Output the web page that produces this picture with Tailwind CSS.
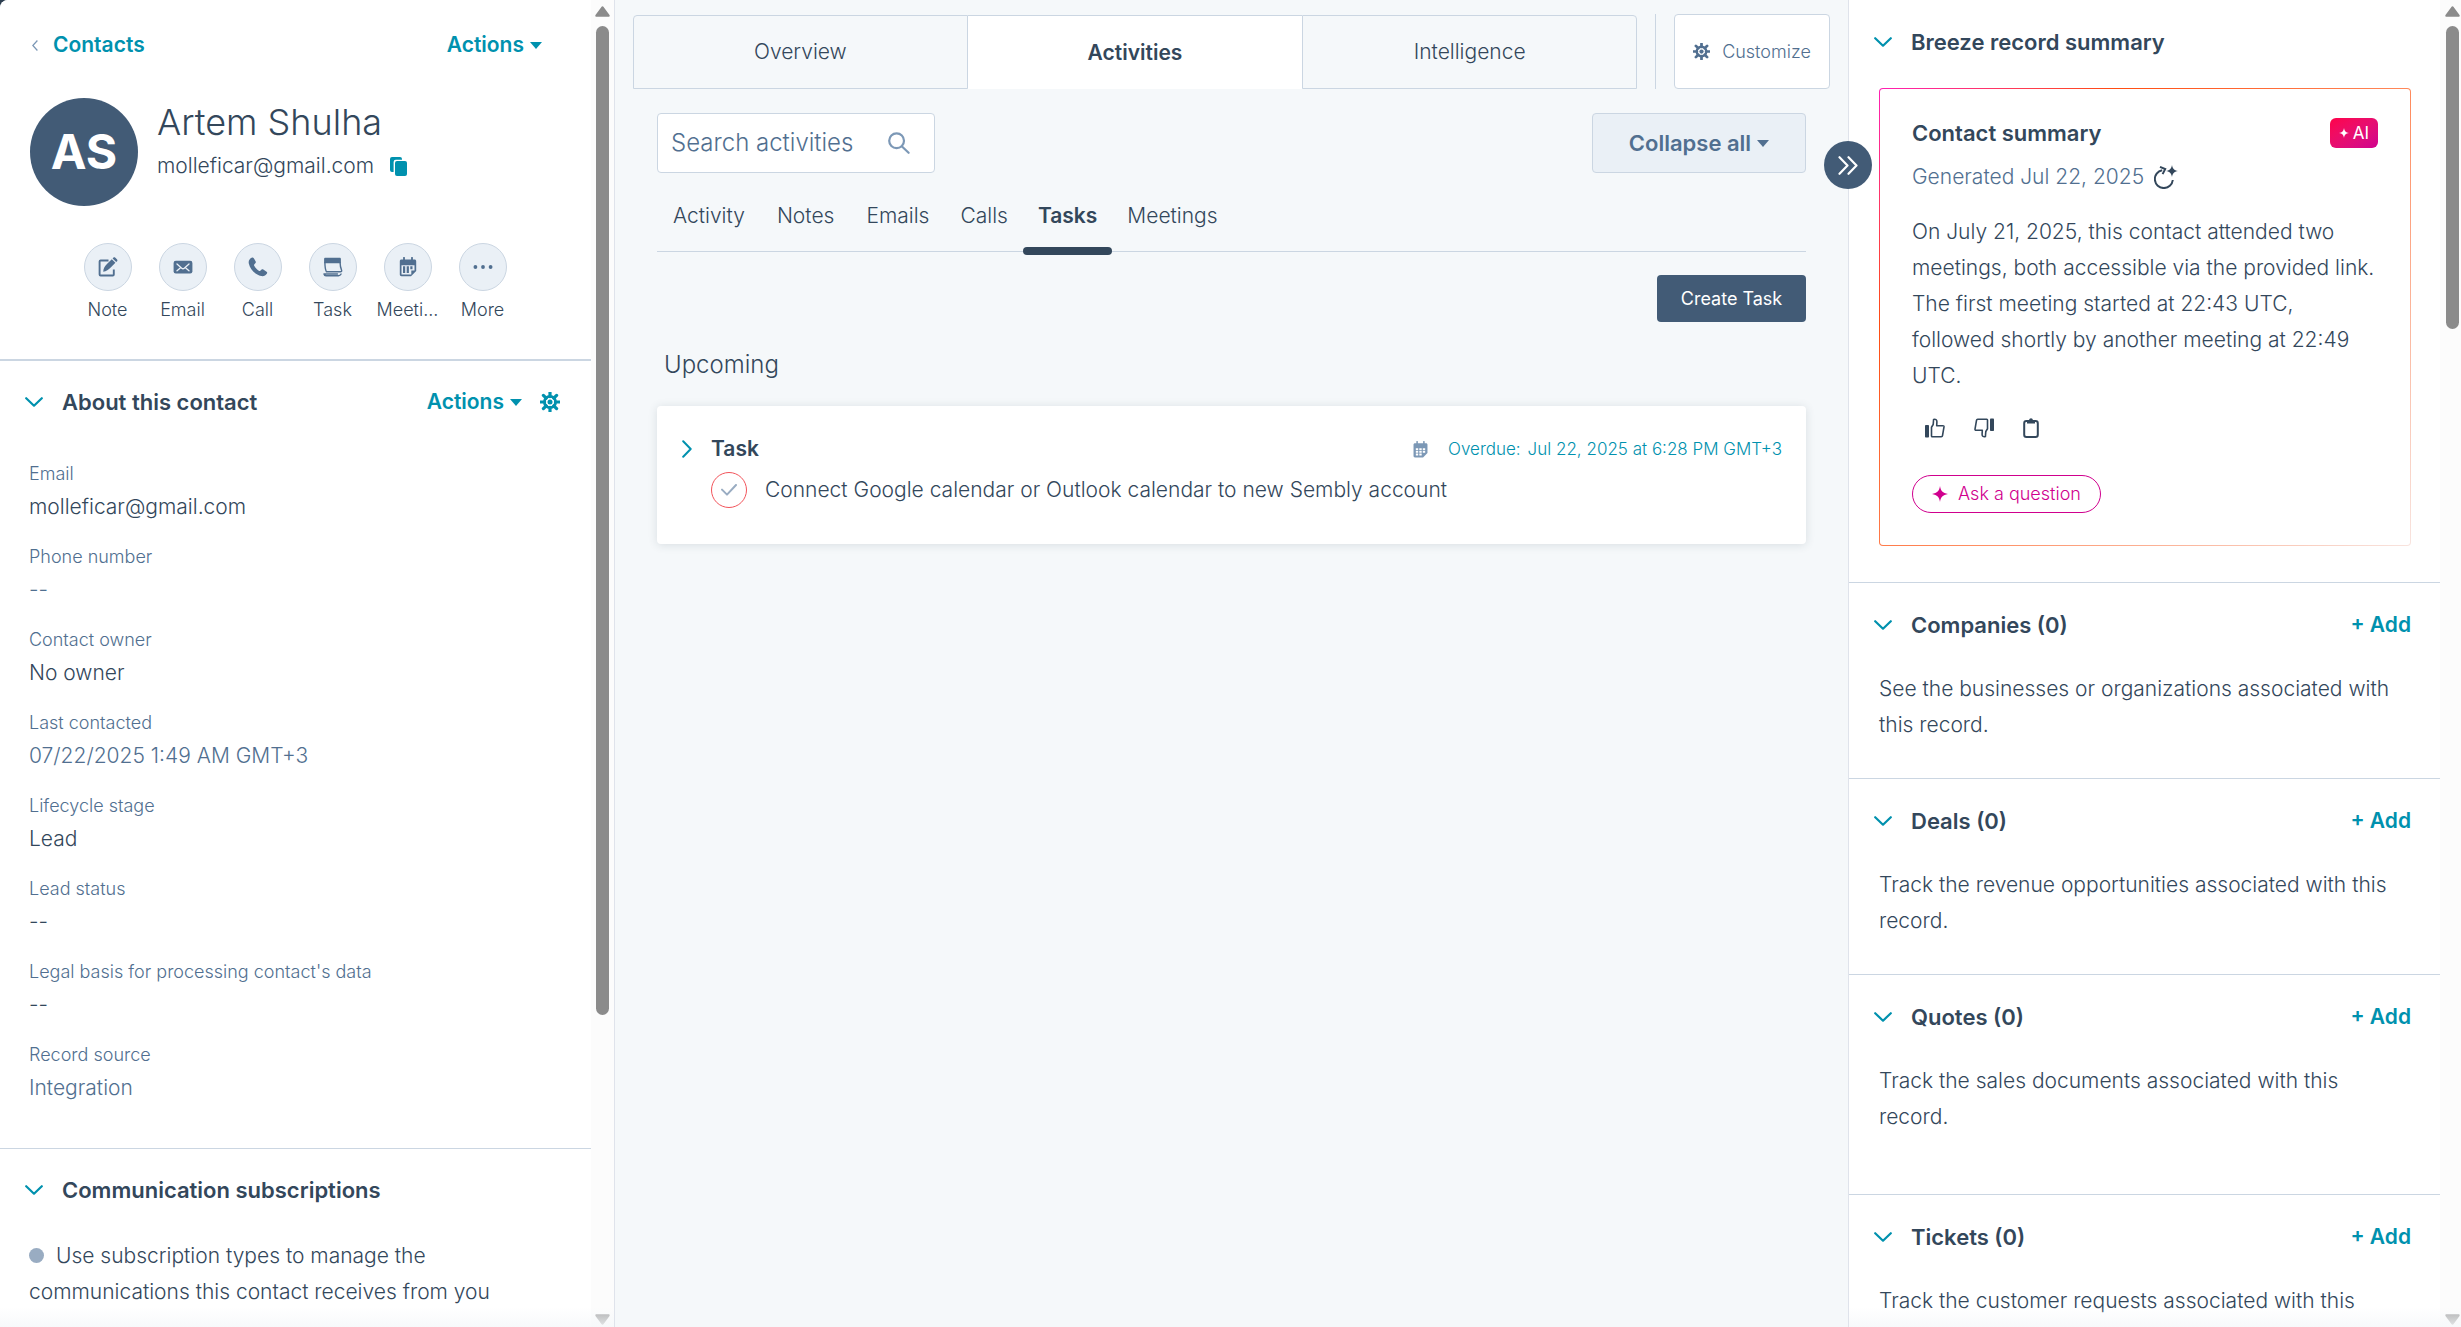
<!DOCTYPE html>
<html lang="en">

<head>
    <meta charset="UTF-8" />
    <meta name="viewport" content="width=device-width, initial-scale=1.0" />
    <title>Artem Shulha - Contacts</title>
    <script src="https://cdn.jsdelivr.net/npm/@tailwindcss/browser@4"></script>
</head>

<body class="h-screen overflow-hidden bg-[#2d3e50] font-['Inter',sans-serif] font-light text-[21px] leading-9 text-[#33475b]">
    <!-- shared icons -->
    <svg class="hidden">
        <symbol id="chevron-down" viewBox="0 0 18 10">
            <path d="M1.2 1.2 9 8.7l7.800-7.500" fill="none" stroke="currentColor" stroke-width="2.200" stroke-linecap="round" stroke-linejoin="round" />
        </symbol>
        <symbol id="caret" viewBox="0 0 12 7">
            <path d="M0 0h12L6 7z" fill="currentColor" />
        </symbol>
        <symbol id="gear" viewBox="0 0 20 20">
            <g stroke="currentColor" fill="none">
                <path d="M10 .6v4M10 15.400v4M.6 10h4M15.400 10h4M3.400 3.400l2.800 2.800M13.800 13.800l2.800 2.800M3.400 16.600l2.800-2.800M13.800 6.200l2.800-2.800" stroke-width="3.200" stroke-linecap="round" />
                <circle cx="10" cy="10" r="5.600" stroke-width="2.800" />
            </g>
            <circle cx="10" cy="10" r="2.500" fill="currentColor" />
        </symbol>
        <symbol id="sparkle" viewBox="0 0 16 16">
            <path d="M8 0c.8 4.800 2.600 7 8 8-5.400 1-7.200 3.200-8 8-.8-4.800-2.600-7-8-8 5.400-1 7.200-3.200 8-8z" fill="currentColor" />
        </symbol>
        <symbol id="thumb" viewBox="0 0 20 20">
            <rect x="0" y="7" width="4" height="12.500" rx=".8" fill="currentColor" />
            <path d="M6.500 18V9.200L8.200 6.500 8.600 1.400c1.900-.5 3.400.2 3.300 2.300l-.2 4h6.200c.8 0 1.200.5 1.100 1.200l-1.500 8.800c-.1.700-.5 1-1.200 1H7.200c-.4 0-.7-.3-.7-.7z" fill="none" stroke="currentColor" stroke-width="1.600" stroke-linejoin="round" />
        </symbol>
        <symbol id="arrow-up" viewBox="0 0 15 11">
            <path d="M6.400.9a1.300 1.300 0 0 1 2.200 0l5.900 8.200c.5.800 0 1.700-.9 1.700H1.400c-.9 0-1.400-.9-.9-1.700z" fill="currentColor" />
        </symbol>
    </svg>

    <div class="flex h-full overflow-hidden rounded-tl-lg bg-[#f5f8fa]">
        <!-- left sidebar -->
        <aside class="relative flex w-[615px] shrink-0 overflow-hidden border-r border-[#dfe3eb] bg-white">
            <div class="min-w-0 flex-1">
                <header class="border-b-2 border-[#cbd6e2] pt-[27px] pb-[34px]">
                    <div class="flex items-center justify-between pr-[49px] pl-8">
                        <a href="#" class="flex items-center gap-[15px] font-semibold text-[#0091ae]">
                            <svg class="h-[11px] w-[6px] text-[#7c98b6]" viewBox="0 0 6 11" fill="none" stroke="currentColor" stroke-width="1.300"><path d="M5.400.5.800 5.500l4.600 5" /></svg>
                            Contacts
                        </a>
                        <button class="flex items-center gap-1.5 font-semibold text-[#0091ae]">Actions <svg class="h-[7px] w-3"><use href="#caret" /></svg></button>
                    </div>

                    <div class="mt-[35px] flex items-start gap-[19px] pl-[30px]">
                        <div class="flex size-[108px] items-center justify-center rounded-full bg-[#425b76] text-[48px] font-bold text-white">AS</div>
                        <div>
                            <h1 class="text-[36px] leading-[48px]">Artem Shulha</h1>
                            <div class="mt-0.5 flex items-center gap-4">
                                molleficar@gmail.com
                                <button aria-label="Copy email" class="text-[#0091ae]">
                                    <svg class="h-[19px] w-[17px]" viewBox="0 0 17 19" fill="currentColor"><rect x="5" y="4" width="12" height="15" rx="2" /><path d="M2 0h8a2 2 0 0 1 2 2v.8H5.800A2.200 2.200 0 0 0 3.600 5v10H2a2 2 0 0 1-2-2V2a2 2 0 0 1 2-2z" /></svg>
                                </button>
                            </div>
                        </div>
                    </div>

                    <div class="mt-[37px] flex pl-[70px] text-[18px] leading-[30px]">
                        <div class="flex w-[75px] flex-col items-center gap-1">
                            <button aria-label="Note" class="flex size-12 items-center justify-center rounded-full border border-[#cbd6e2] bg-[#eaf0f6] text-[#516f90]">
                                <svg class="size-5" viewBox="0 0 20 20"><path d="M10.500 3.500H2.600c-.6 0-1 .4-1 1v13c0 .6.4 1 1 1h12.200c.6 0 1-.4 1-1v-5" fill="none" stroke="currentColor" stroke-width="1.900" /><path d="M5.200 14.800c.3-3.500 1.600-5.700 4-8l4.600-4.600 3.600 3.500-4.700 4.700c-2.300 2.300-4.200 3.800-7.500 4.400zM14.600 1.500l.9-.9c.5-.5 1.100-.5 1.600 0l2 2c.5.500.5 1.100 0 1.600l-.9.9z" fill="currentColor" /></svg>
                            </button>
                            <span>Note</span>
                        </div>
                        <div class="flex w-[75px] flex-col items-center gap-1">
                            <button aria-label="Email" class="flex size-12 items-center justify-center rounded-full border border-[#cbd6e2] bg-[#eaf0f6] text-[#516f90]">
                                <svg class="size-5" viewBox="0 0 20 20"><rect x=".6" y="3.800" width="18.800" height="12.600" rx="2.200" fill="currentColor" /><path d="m4 7 4.700 4.200c.8.700 1.800.7 2.600 0L16 7M4 13.800l3-2.600M16 13.800l-3-2.600" fill="none" stroke="#eaf0f6" stroke-width="1.300" stroke-linecap="round" /></svg>
                            </button>
                            <span>Email</span>
                        </div>
                        <div class="flex w-[75px] flex-col items-center gap-1">
                            <button aria-label="Call" class="flex size-12 items-center justify-center rounded-full border border-[#cbd6e2] bg-[#eaf0f6] text-[#516f90]">
                                <svg class="size-5" viewBox="0 0 20 20"><path d="M3.600.8C1.300 2 .3 4 .8 6.500c1.300 6 6.200 11.100 12.400 12.500 2.300.5 4.600-.5 5.800-2.500.4-.7.200-1.400-.4-1.800l-3.300-2.200c-.6-.4-1.200-.3-1.700.1l-1.300 1.100c-.5.400-1 .4-1.500.1C9 12.500 7.300 10.700 6.200 8.700c-.3-.5-.2-1 .2-1.500L7.500 6c.4-.5.400-1.100.1-1.700L5.800 1.300C5.300.5 4.500.3 3.600.8z" fill="currentColor" /></svg>
                            </button>
                            <span>Call</span>
                        </div>
                        <div class="flex w-[75px] flex-col items-center gap-1">
                            <button aria-label="Task" class="flex size-12 items-center justify-center rounded-full border border-[#cbd6e2] bg-[#eaf0f6] text-[#516f90]">
                                <svg class="size-5" viewBox="0 0 20 20"><path d="M2.500.8h14c.9 0 1.400.5 1.400 1.300v4.100H1.100V2.100c0-.8.500-1.300 1.400-1.300z" fill="currentColor" /><path d="M1.900 5.500c0 4.200.2 6.600 1.500 9.300h14c1.100 0 1.500-.7 1.200-1.500-1-2.500-1.500-4.500-1.500-7.800M1 17c.2.900.8 1.700 2 1.700h12.500c1.500 0 2-.6 2.600-1.700M1 17h13.500" fill="none" stroke="currentColor" stroke-width="1.400" stroke-linecap="round" /></svg>
                            </button>
                            <span>Task</span>
                        </div>
                        <div class="flex w-[75px] flex-col items-center gap-1">
                            <button aria-label="Meeting" class="flex size-12 items-center justify-center rounded-full border border-[#cbd6e2] bg-[#eaf0f6] text-[#516f90]">
                                <svg class="size-5" viewBox="0 0 20 20"><path d="M3.500 2.600h13c1 0 1.700.7 1.700 1.700v9.700L13 19.300H3.500c-1 0-1.700-.7-1.700-1.700V4.300c0-1 .7-1.700 1.700-1.700z" fill="currentColor" /><path d="M6 .8v3.500M14 .8v3.500" stroke="currentColor" stroke-width="1.800" stroke-linecap="round" /><path d="M3.500 8.300h13v5.200h-3.200v4.100H3.500z" fill="#eaf0f6" /><path d="M6.100 9.300v6.800M9.800 9.300v6.800M13.400 9.300v3" stroke="currentColor" stroke-width="2.200" /></svg>
                            </button>
                            <span>Meeti...</span>
                        </div>
                        <div class="flex w-[75px] flex-col items-center gap-1">
                            <button aria-label="More" class="flex size-12 items-center justify-center rounded-full border border-[#cbd6e2] bg-[#eaf0f6] text-[#516f90]">
                                <svg class="size-5" viewBox="0 0 20 20" fill="currentColor"><circle cx="2.400" cy="10" r="1.900" /><circle cx="10" cy="10" r="1.900" /><circle cx="17.600" cy="10" r="1.900" /></svg>
                            </button>
                            <span>More</span>
                        </div>
                    </div>
                </header>

                <section class="border-b border-[#cbd6e2] pt-[23px] pb-[42px]">
                    <div class="flex items-center pr-[31px] pl-[25px] font-semibold">
                        <button class="flex items-center gap-[19px] text-[22px]"><svg class="h-2.5 w-[18px] text-[#0091ae]"><use href="#chevron-down" /></svg> About this contact</button>
                        <button class="ml-auto flex items-center gap-1.5 text-[#0091ae]">Actions <svg class="h-[7px] w-3"><use href="#caret" /></svg></button>
                        <button aria-label="Settings" class="ml-[18px] text-[#0091ae]"><svg class="size-5"><use href="#gear" /></svg></button>
                    </div>
                    <dl class="mt-[39px] flex flex-col gap-[17px] pl-[29px]">
                        <div>
                            <dt class="text-[18px] leading-[30px] text-[#516f90]">Email</dt>
                            <dd>molleficar@gmail.com</dd>
                        </div>
                        <div>
                            <dt class="text-[18px] leading-[30px] text-[#516f90]">Phone number</dt>
                            <dd class="text-[#516f90]">--</dd>
                        </div>
                        <div>
                            <dt class="text-[18px] leading-[30px] text-[#516f90]">Contact owner</dt>
                            <dd>No owner</dd>
                        </div>
                        <div>
                            <dt class="text-[18px] leading-[30px] text-[#516f90]">Last contacted</dt>
                            <dd class="text-[#516f90]">07/22/2025 1:49 AM GMT+3</dd>
                        </div>
                        <div>
                            <dt class="text-[18px] leading-[30px] text-[#516f90]">Lifecycle stage</dt>
                            <dd>Lead</dd>
                        </div>
                        <div>
                            <dt class="text-[18px] leading-[30px] text-[#516f90]">Lead status</dt>
                            <dd>--</dd>
                        </div>
                        <div>
                            <dt class="text-[18px] leading-[30px] text-[#516f90]">Legal basis for processing contact's data</dt>
                            <dd>--</dd>
                        </div>
                        <div>
                            <dt class="text-[18px] leading-[30px] text-[#516f90]">Record source</dt>
                            <dd class="text-[#516f90]">Integration</dd>
                        </div>
                    </dl>
                </section>

                <section class="pt-[23px]">
                    <button class="flex items-center gap-[19px] pl-[25px] text-[22px] font-semibold"><svg class="h-2.5 w-[18px] text-[#0091ae]"><use href="#chevron-down" /></svg> Communication subscriptions</button>
                    <p class="mt-[30px] pr-16 pl-[29px]"><span class="mr-3 inline-block size-[15px] rounded-full bg-[#99acc2]"></span>Use subscription types to manage the communications this contact receives from you</p>
                </section>
            </div>
            <!-- scrollbar -->
            <div class="flex w-[23px] flex-col items-center justify-between bg-[#fcfcfc] pt-1.5 pb-0.5 text-[#8b8b8b]">
                <svg class="h-[11px] w-[15px]"><use href="#arrow-up" /></svg>
                <div class="mt-[9px] h-[75%] w-[13px] rounded-full bg-[#8b8b8b]"></div>
                <svg class="mt-auto h-[11px] w-[15px] rotate-180 text-[#a8a8a8]"><use href="#arrow-up" /></svg>
            </div>
            <div class="absolute inset-x-0 bottom-0 h-5 bg-linear-to-b from-transparent to-[#f5f8fa]/80"></div>
        </aside>

        <!-- main column -->
        <main class="min-w-0 flex-1 px-[18px] pt-3.5">
            <div class="flex h-[75px]">
                <div role="tablist" class="mt-px grid flex-1 grid-cols-3 text-center">
                    <button role="tab" class="rounded-tl border border-[#cbd6e2]">Overview</button>
                    <button role="tab" aria-selected="true" class="border-t border-[#cbd6e2] bg-white font-semibold">Activities</button>
                    <button role="tab" class="rounded-tr border border-[#cbd6e2]">Intelligence</button>
                </div>
                <div class="mx-[18px] w-px bg-[#cbd6e2]"></div>
                <button class="flex w-[156px] items-center justify-center gap-3 rounded border border-[#cbd6e2] bg-white text-[18px] text-[#516f90]"><svg class="size-[17px]"><use href="#gear" /></svg> Customize</button>
            </div>

            <div class="px-6">
                <div class="mt-6 flex justify-between">
                    <label class="flex h-[60px] w-[278px] items-center rounded border border-[#cbd6e2] bg-white pr-6 pl-[13px]">
                        <input type="search" aria-label="Search activities" placeholder="Search activities" class="w-0 min-w-0 flex-1 bg-transparent text-[24px] outline-none placeholder:text-[#516f90]" />
                        <svg class="size-[22px] text-[#7c98b6]" viewBox="0 0 22 22" fill="none" stroke="currentColor" stroke-width="2.200" stroke-linecap="round"><circle cx="8.600" cy="8.800" r="7.400" /><path d="m14 14.500 6.600 6.300" /></svg>
                    </label>
                    <button class="flex h-[60px] w-[214px] items-center justify-center gap-1.5 rounded border border-[#cbd6e2] bg-[#eaf0f6] text-[22px] font-semibold text-[#516f90]">Collapse all <svg class="h-[7px] w-3"><use href="#caret" /></svg></button>
                </div>

                <nav class="mt-[17px] flex border-b border-[#cbd6e2]">
                    <a href="#" class="px-4 pt-2 pb-[17px]">Activity</a>
                    <a href="#" class="px-4 pt-2 pb-[17px]">Notes</a>
                    <a href="#" class="px-4 pt-2 pb-[17px]">Emails</a>
                    <a href="#" class="px-[15px] pt-2 pb-[17px]">Calls</a>
                    <a href="#" class="relative px-[15px] pt-2 pb-[17px] font-semibold">Tasks<span class="absolute inset-x-0 -bottom-1 h-2 rounded-full bg-[#33475b]"></span></a>
                    <a href="#" class="px-[15px] pt-2 pb-[17px]">Meetings</a>
                </nav>

                <button class="mt-[23px] ml-auto block h-[47px] w-[149px] rounded bg-[#425b76] text-[18px] font-normal text-white">Create Task</button>

                <h2 class="mt-[25px] pl-[7px] text-[24px]">Upcoming</h2>

                <article class="mt-[23px] rounded bg-white pt-[25px] pr-6 pb-9 pl-[25px] shadow-[0_1px_10px_rgba(45,62,80,0.14)]">
                    <div class="flex items-center">
                        <button aria-label="Expand task" class="text-[#0091ae]"><svg class="h-[18px] w-2.5" viewBox="0 0 10 18" fill="none" stroke="currentColor" stroke-width="2" stroke-linecap="round" stroke-linejoin="round"><path d="M1.200 1.200 8.700 9l-7.500 7.800" /></svg></button>
                        <h3 class="ml-[19px] text-[21px] font-semibold">Task</h3>
                        <svg class="ml-auto size-[17px] text-[#7c98b6]" viewBox="0 0 20 20"><path d="M3.500 2.600h13c1 0 1.700.7 1.700 1.700v9.700L13 19.300H3.500c-1 0-1.700-.7-1.700-1.700V4.300c0-1 .7-1.700 1.700-1.700z" fill="currentColor" /><path d="M6 .8v3.500M14 .8v3.500" stroke="currentColor" stroke-width="1.800" stroke-linecap="round" /><path d="M4.500 9.500h11M4.500 12.700h11M4.500 15.900h7.500" stroke="#fff" stroke-width="2.200" stroke-dasharray="2.800 1.300" /></svg>
                        <span class="ml-[19px] text-[17px] text-[#0091ae]">Overdue:</span>
                        <a href="#" class="ml-[7px] text-[17px] text-[#0091ae]">Jul 22, 2025 at 6:28 PM GMT+3</a>
                    </div>
                    <div class="mt-[5px] flex items-center gap-[18px] pl-[29px]">
                        <button aria-label="Mark task complete" class="flex size-9 items-center justify-center rounded-full border border-[#f2545b] text-[#99acc2]">
                            <svg class="h-3 w-4" viewBox="0 0 16 12" fill="none" stroke="currentColor" stroke-width="2" stroke-linecap="round" stroke-linejoin="round"><path d="m1 5.600 5 5L15 1" /></svg>
                        </button>
                        <p>Connect Google calendar or Outlook calendar to new Sembly account</p>
                    </div>
                </article>
            </div>
        </main>

        <!-- right sidebar -->
        <aside class="relative flex w-[613px] shrink-0 border-l border-[#dfe3eb] bg-white">
            <button aria-label="Collapse sidebar" class="absolute top-[141px] -left-[25px] flex size-12 items-center justify-center rounded-full bg-[#425b76] text-white">
                <svg class="h-[19px] w-5" viewBox="0 0 20 19" fill="none" stroke="currentColor" stroke-width="2.200" stroke-linecap="round" stroke-linejoin="round"><path d="m1.500 1.200 8 8.300-8 8.300M10.500 1.200l8 8.300-8 8.300" /></svg>
            </button>
            <div class="min-w-0 flex-1">
                <section class="border-b border-[#cbd6e2] pt-6 pr-[29px] pb-9 pl-[25px]">
                    <button class="flex items-center gap-[19px] text-[22px] font-semibold"><svg class="h-2.5 w-[18px] text-[#0091ae]"><use href="#chevron-down" /></svg> Breeze record summary</button>
                    <div class="mt-7 ml-[5px] rounded bg-[linear-gradient(135deg,#ff1fb4,#ff4d12_24%,#ff8a5c_54%,#f8e4df)] p-px">
                        <div class="rounded-[3px] bg-white px-8 pt-[26px] pb-8">
                            <div class="flex items-center justify-between">
                                <h3 class="text-[22px] font-semibold">Contact summary</h3>
                                <span class="flex h-[30px] w-12 items-center justify-center gap-1 rounded-md bg-linear-to-br from-[#ff0048] to-[#d0008e] text-[17px] font-normal text-white"><svg class="size-2.5"><use href="#sparkle" /></svg>AI</span>
                            </div>
                            <div class="mt-2 flex items-center gap-2.5 text-[#516f90]">
                                Generated Jul 22, 2025
                                <button aria-label="Regenerate" class="text-[#33475b]">
                                    <svg class="size-6" viewBox="0 0 24 24"><path d="M8.200 5.200A9 9 0 1 0 18.800 15" fill="none" stroke="currentColor" stroke-width="2" /><path d="m6 1.800 5.200 2.300-2.600 5" fill="none" stroke="currentColor" stroke-width="2" /><path d="M18 0c.6 3.600 2 5.300 6 6-4 .7-5.400 2.400-6 6-.6-3.600-2-5.300-6-6 4-.7 5.400-2.400 6-6z" fill="currentColor" /></svg>
                                </button>
                            </div>
                            <p class="mt-[19px]">On July 21, 2025, this contact attended two meetings, both accessible via the provided link. The first meeting started at 22:43 UTC, followed shortly by another meeting at 22:49 UTC.</p>
                            <div class="mt-4 flex h-9 items-center gap-[29px] pl-[13px]">
                                <button aria-label="Like"><svg class="size-5"><use href="#thumb" /></svg></button>
                                <button aria-label="Dislike"><svg class="size-5 rotate-180"><use href="#thumb" /></svg></button>
                                <button aria-label="Copy summary">
                                    <svg class="h-5 w-4" viewBox="0 0 16 20"><rect x="1.200" y="3" width="13.600" height="15.900" rx="2.200" fill="none" stroke="currentColor" stroke-width="2" /><path d="M4 2.500h2C6.200 1 7 .2 8 .2S9.800 1 10 2.500h2v3H4z" fill="currentColor" /></svg>
                                </button>
                            </div>
                            <button class="mt-[29px] flex h-[38px] items-center gap-2.5 rounded-full border border-[#d0008e] px-[19px] text-[18px] text-[#d0008e]"><svg class="size-4"><use href="#sparkle" /></svg> Ask a question</button>
                        </div>
                    </div>
                </section>

                <section class="border-b border-[#cbd6e2] pt-6 pr-[29px] pb-[35px] pl-[25px]">
                    <div class="flex items-center justify-between font-semibold">
                        <button class="flex items-center gap-[19px] text-[22px]"><svg class="h-2.5 w-[18px] text-[#0091ae]"><use href="#chevron-down" /></svg> Companies (0)</button>
                        <button class="text-[#0091ae]">+ Add</button>
                    </div>
                    <p class="mt-7 pl-[5px]">See the businesses or organizations associated with this record.</p>
                </section>

                <section class="border-b border-[#cbd6e2] pt-6 pr-[29px] pb-[35px] pl-[25px]">
                    <div class="flex items-center justify-between font-semibold">
                        <button class="flex items-center gap-[19px] text-[22px]"><svg class="h-2.5 w-[18px] text-[#0091ae]"><use href="#chevron-down" /></svg> Deals (0)</button>
                        <button class="text-[#0091ae]">+ Add</button>
                    </div>
                    <p class="mt-7 pl-[5px]">Track the revenue opportunities associated with this record.</p>
                </section>

                <section class="border-b border-[#cbd6e2] pt-6 pr-[29px] pb-[59px] pl-[25px]">
                    <div class="flex items-center justify-between font-semibold">
                        <button class="flex items-center gap-[19px] text-[22px]"><svg class="h-2.5 w-[18px] text-[#0091ae]"><use href="#chevron-down" /></svg> Quotes (0)</button>
                        <button class="text-[#0091ae]">+ Add</button>
                    </div>
                    <p class="mt-7 pl-[5px]">Track the sales documents associated with this record.</p>
                </section>

                <section class="pt-6 pr-[29px] pl-[25px]">
                    <div class="flex items-center justify-between font-semibold">
                        <button class="flex items-center gap-[19px] text-[22px]"><svg class="h-2.5 w-[18px] text-[#0091ae]"><use href="#chevron-down" /></svg> Tickets (0)</button>
                        <button class="text-[#0091ae]">+ Add</button>
                    </div>
                    <p class="mt-7 pl-[5px]">Track the customer requests associated with this</p>
                </section>
            </div>
            <!-- scrollbar -->
            <div class="flex w-[21px] flex-col items-center justify-between bg-[#fcfcfc] pt-1.5 pb-0.5 pl-1 text-[#8b8b8b]">
                <svg class="h-[11px] w-[15px]"><use href="#arrow-up" /></svg>
                <div class="mt-[9px] h-[23%] w-[13px] rounded-full bg-[#8b8b8b]"></div>
                <svg class="mt-auto h-[11px] w-[15px] rotate-180 text-[#a8a8a8]"><use href="#arrow-up" /></svg>
            </div>
            <div class="absolute inset-x-0 bottom-0 h-5 bg-linear-to-b from-transparent to-[#f5f8fa]/80"></div>
        </aside>
    </div>
</body>

</html>
